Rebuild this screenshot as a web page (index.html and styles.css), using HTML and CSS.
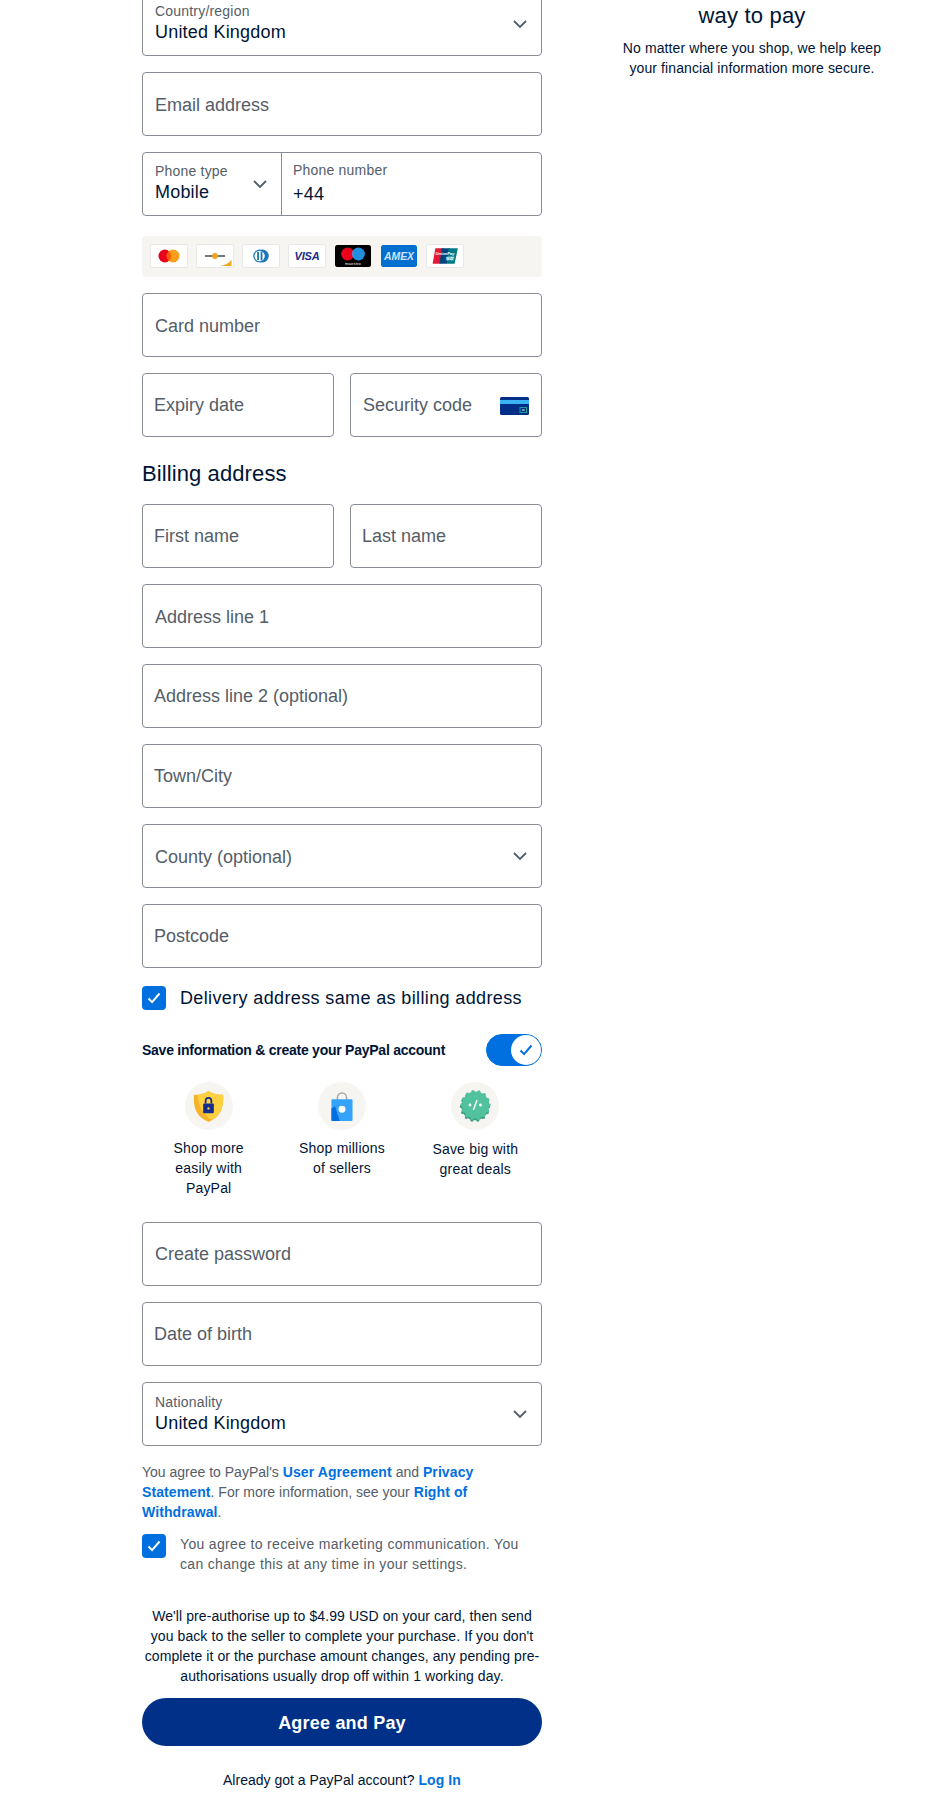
FILE: index.html
```html
<!DOCTYPE html>
<html lang="en">
<head>
    <meta charset="UTF-8">
    <meta name="viewport" content="width=device-width, initial-scale=1.0">
    <title>PayPal Guest Checkout</title>
    <link rel="stylesheet" href="styles.css">
</head>
<body>
    <svg class="defs" width="0" height="0">
        <symbol id="chevron" viewBox="0 0 14 9"><path d="M1 1l6 6 6-6" fill="none" stroke="#545d68" stroke-width="1.8"/></symbol>
        <symbol id="tick" viewBox="0 0 14 12"><path d="M1.5 6.5l3.6 3.6 7.4-8.6" fill="none" stroke="currentColor" stroke-width="2"/></symbol>
    </svg>

    <div class="page">
        <main class="checkout">
            <div class="field field-stacked">
                <span class="small-label">Country/region</span>
                <span class="value">United Kingdom</span>
                <svg class="chevron"><use href="#chevron"/></svg>
            </div>

            <div class="field"><span class="hint">Email address</span></div>

            <div class="phone">
                <div class="phone-type">
                    <span class="small-label">Phone type</span>
                    <span class="value">Mobile</span>
                    <svg class="chevron"><use href="#chevron"/></svg>
                </div>
                <div class="phone-number">
                    <span class="small-label">Phone number</span>
                    <span class="value">+44</span>
                </div>
            </div>

            <div class="cards">
                <svg class="card" viewBox="0 0 38 24">
                    <circle cx="14.5" cy="12" r="7" fill="#eb001b"/>
                    <circle cx="23.5" cy="12" r="7" fill="#f79e1b"/>
                    <path d="M19 6.6a7 7 0 0 1 0 10.8 7 7 0 0 1 0-10.8z" fill="#ff5f00"/>
                </svg>
                <svg class="card" viewBox="0 0 38 24">
                    <path d="M8 12h22" stroke="#4a4a4a" stroke-width="1.6"/>
                    <circle cx="19" cy="12" r="3.2" fill="#f0a51e"/>
                    <path d="M24 23c6-1 10-3 13-7v7z" fill="#f0a51e"/>
                </svg>
                <svg class="card" viewBox="0 0 38 24">
                    <circle cx="20.5" cy="12" r="7" fill="#1b78b8"/>
                    <circle cx="17.5" cy="12" r="7" fill="#1b78b8"/>
                    <circle cx="17.5" cy="12" r="5.6" fill="#fff"/>
                    <path d="M15.8 7.6v8.8" stroke="#1b78b8" stroke-width="2"/>
                    <path d="M19.6 7v10" stroke="#1b78b8" stroke-width="2"/>
                </svg>
                <svg class="card" viewBox="0 0 38 24">
                    <text class="visa-text" x="19" y="16.5" text-anchor="middle">VISA</text>
                </svg>
                <svg class="card card-bare" viewBox="0 0 36 22">
                    <rect width="36" height="22" rx="1.5" fill="#000"/>
                    <circle cx="12.6" cy="9" r="6.5" fill="#eb001b"/>
                    <circle cx="23.4" cy="9" r="6.5" fill="#1f8fe0"/>
                    <path d="M18 5.400a6.500 6.500 0 0 1 0 7.200 6.500 6.500 0 0 1 0-7.200z" fill="#7673c0"/>
                    <text class="maestro-text" x="18" y="20" text-anchor="middle">maestro</text>
                </svg>
                <svg class="card card-bare" viewBox="0 0 36 22">
                    <rect width="36" height="22" rx="1.5" fill="#016fd0"/>
                    <text class="amex-text" x="18" y="15" text-anchor="middle" textLength="30" lengthAdjust="spacingAndGlyphs">AMEX</text>
                </svg>
                <svg class="card" viewBox="0 0 38 24">
                    <path d="M8.500 3.500h9l-3.500 17H5.500z" fill="#e21836"/>
                    <path d="M15.500 3.500h9l-3.500 17h-8z" fill="#00447c"/>
                    <path d="M23 3.500h10l-3.500 17H21z" fill="#007b84"/>
                    <text class="union-text" x="19" y="10.500" text-anchor="middle">UnionPay</text>
                    <text class="union-text" x="24" y="16.500" text-anchor="middle">银联</text>
                </svg>
            </div>

            <div class="field"><span class="hint">Card number</span></div>

            <div class="pair">
                <div class="field field-tight field-expiry"><span class="hint">Expiry date</span></div>
                <div class="field field-cvv">
                    <span class="hint">Security code</span>
                    <svg class="cvv-icon" viewBox="0 0 29 18">
                        <rect width="29" height="18" rx="1.5" fill="#012f87"/>
                        <rect y="3" width="29" height="4" fill="#3cb4f4"/>
                        <rect x="20" y="10.5" width="6.5" height="5" fill="none" stroke="#1e9e9e" stroke-width="1"/>
                        <path d="M21.8 13h3" stroke="#cfe" stroke-width="1"/>
                    </svg>
                </div>
            </div>

            <h2 class="section-title">Billing address</h2>

            <div class="pair">
                <div class="field field-tight"><span class="hint">First name</span></div>
                <div class="field field-tight"><span class="hint">Last name</span></div>
            </div>

            <div class="field"><span class="hint">Address line 1</span></div>
            <div class="field field-tight"><span class="hint">Address line 2 (optional)</span></div>
            <div class="field field-tight"><span class="hint">Town/City</span></div>
            <div class="field">
                <span class="hint">County (optional)</span>
                <svg class="chevron"><use href="#chevron"/></svg>
            </div>
            <div class="field field-tight"><span class="hint">Postcode</span></div>

            <label class="check-row">
                <span class="checkbox"><svg class="tick"><use href="#tick"/></svg></span>
                <span class="check-text">Delivery address same as billing address</span>
            </label>

            <div class="save-row">
                <span class="save-text">Save information &amp; create your PayPal account</span>
                <span class="toggle"><span class="knob"><svg class="tick"><use href="#tick"/></svg></span></span>
            </div>

            <div class="perks">
                <div class="perk">
                    <span class="perk-icon">
                        <svg viewBox="0 0 32 34" width="31" height="33" preserveAspectRatio="none">
                            <path d="M16 1c4 3 9 4 15 4 1 12-2 23-15 28C3 28 0 17 1 5c6 0 11-1 15-4z" fill="#f5b32c"/>
                            <path d="M16 1c4 3 9 4 15 4 1 10-2 20-11 26C10 26 5 15 5 5c4 0 8-2 11-4z" fill="#ffd140"/>
                            <rect x="10.500" y="14" width="11" height="10" rx="1" fill="#142c8e"/>
                            <path d="M13 14v-3a3 3 0 0 1 6 0v3" fill="none" stroke="#142c8e" stroke-width="1.800"/>
                            <circle cx="16" cy="19" r="1.200" fill="#ffd140"/>
                        </svg>
                    </span>
                    <p class="perk-text">Shop more<br>easily with<br>PayPal</p>
                </div>
                <div class="perk">
                    <span class="perk-icon">
                        <svg viewBox="0 0 24 32" width="22" height="29" preserveAspectRatio="none">
                            <path d="M7 9V6a5 5 0 0 1 10 0v3" fill="none" stroke="#a8a8a8" stroke-width="1.600"/>
                            <rect x="0.500" y="8" width="23" height="24" rx="1" fill="#36a3fb"/>
                            <path d="M0.500 18l4-2 5 16H1.500a1 1 0 0 1-1-1z" fill="#0070e0"/>
                            <circle cx="12" cy="19" r="3.800" fill="#fff"/>
                        </svg>
                    </span>
                    <p class="perk-text">Shop millions<br>of sellers</p>
                </div>
                <div class="perk perk-low">
                    <span class="perk-icon">
                        <svg viewBox="0 0 32 32" width="32" height="32">
                            <circle class="badge-edge" cx="16" cy="16.800" r="13.500"/>
                            <circle class="badge-top" cx="16.500" cy="15" r="13.500"/>
                            <path d="M18 10l-3.600 10" stroke="#fff" stroke-width="1.400"/>
                            <circle cx="11" cy="15" r="1.400" fill="#fff"/>
                            <circle cx="21.500" cy="15" r="1.400" fill="#fff"/>
                        </svg>
                    </span>
                    <p class="perk-text">Save big with<br>great deals</p>
                </div>
            </div>

            <div class="field field-up"><span class="hint">Create password</span></div>
            <div class="field field-tight"><span class="hint">Date of birth</span></div>
            <div class="field field-stacked field-nationality">
                <span class="small-label">Nationality</span>
                <span class="value">United Kingdom</span>
                <svg class="chevron"><use href="#chevron"/></svg>
            </div>

            <p class="legal">You agree to PayPal's <a href="#">User Agreement</a> and <a href="#">Privacy Statement</a>. For more information, see your <a href="#">Right of Withdrawal</a>.</p>

            <label class="check-row check-row-top">
                <span class="checkbox"><svg class="tick"><use href="#tick"/></svg></span>
                <span class="marketing-text">You agree to receive marketing communication. You can change this at any time in your settings.</span>
            </label>

            <p class="preauth">We'll pre-authorise up to $4.99 USD on your card, then send you back to the seller to complete your purchase. If you don't complete it or the purchase amount changes, any pending pre-authorisations usually drop off within 1 working day.</p>

            <button class="pay-button" type="button">Agree and Pay</button>

            <p class="login">Already got a PayPal account? <a href="#">Log In</a></p>
        </main>

        <aside class="promo">
            <h2 class="promo-title">PayPal is the safer, easier<br>way to pay</h2>
            <p class="promo-text">No matter where you shop, we help keep your financial information more secure.</p>
        </aside>
    </div>
</body>
</html>
```

FILE: styles.css
```css
* {
    box-sizing: border-box;
}

html, body {
    margin: 0;
    height: 1810px;
    overflow: hidden;
    background: #fff;
}

body {
    font-family: "Liberation Sans", Arial, sans-serif;
    color: #001435;
    letter-spacing: 0.2px;
}

.defs {
    position: absolute;
}

.page {
    display: flex;
    align-items: flex-start;
    gap: 60px;
    margin-top: -8px;
    padding-left: 142px;
}

.checkout {
    width: 400px;
    flex: none;
}

/* Campos */
.field, .phone {
    height: 64px;
    border: 1px solid #888c94;
    border-radius: 4px;
    background: #fff;
    margin-bottom: 16px;
}

.field {
    display: flex;
    align-items: center;
    padding: 2px 0 0 12px;
    position: relative;
}

.field-tight {
    padding-top: 0;
    padding-left: 11px;
}

.field-expiry, .field-cvv {
    padding-top: 1px;
}

.field-up {
    padding-top: 0;
}

.field-stacked {
    flex-direction: column;
    align-items: flex-start;
    justify-content: center;
    padding-top: 0;
    padding-bottom: 3px;
}

.field-nationality {
    padding-bottom: 1px;
}

.hint {
    font-size: 18px;
    letter-spacing: 0;
    color: #545d68;
}

.small-label {
    font-size: 14px;
    line-height: 20px;
    color: #545d68;
}

.value {
    font-size: 18px;
    line-height: 23px;
    color: #001435;
}

.chevron {
    position: absolute;
    right: 14px;
    top: 27px;
    width: 14px;
    height: 9px;
}

.phone {
    display: flex;
    margin-bottom: 20px;
}

.phone-type, .phone-number {
    display: flex;
    flex-direction: column;
    justify-content: center;
    position: relative;
}

.phone-type {
    width: 139px;
    padding: 0 0 3px 12px;
    border-right: 1px solid #888c94;
}

.phone-number {
    flex: 1;
    padding: 0 0 2px 11px;
}

.phone-number .value {
    margin-top: 3px;
}

.cards {
    display: flex;
    gap: 8px;
    height: 41px;
    padding: 8px;
    margin-bottom: 16px;
    background: #f6f5f1;
    border-radius: 4px;
}

.card {
    width: 38px;
    height: 24px;
    flex: none;
    background: #fff;
    border: 1px solid #e8e8e6;
    border-radius: 2px;
}

.card-bare {
    width: 36px;
    height: 22px;
    margin: 1px;
    background: none;
    border: none;
}

.visa-text {
    font: italic bold 12px "Liberation Sans", sans-serif;
    letter-spacing: -0.2px;
    fill: #1a2a8a;
}

.maestro-text {
    font: 4px "Liberation Sans", sans-serif;
    fill: #fff;
}

.amex-text {
    font: italic bold 10.5px "Liberation Sans", sans-serif;
    letter-spacing: 0;
    fill: #cfe4fa;
}

.union-text {
    font: italic bold 4.5px "Liberation Sans", "Noto Sans CJK SC", sans-serif;
    letter-spacing: 0;
    fill: #fff;
}

.pair {
    display: grid;
    grid-template-columns: 1fr 1fr;
    gap: 16px;
}

.field-cvv {
    padding-left: 12px;
}

.cvv-icon {
    position: absolute;
    right: 12px;
    top: 23px;
    width: 29px;
    height: 18px;
}

.section-title {
    margin: 5px 0 15px;
    font-size: 22px;
    line-height: 31px;
    font-weight: 400;
    letter-spacing: 0.1px;
}

/* Casillas */
.check-row {
    display: flex;
    align-items: center;
    gap: 14px;
    margin: 18px 0 24px;
}

.checkbox {
    width: 24px;
    height: 24px;
    flex: none;
    display: flex;
    align-items: center;
    justify-content: center;
    background: #0070e0;
    border-radius: 4px;
    color: #fff;
}

.tick {
    width: 14px;
    height: 12px;
}

.check-text {
    font-size: 18px;
    letter-spacing: 0.37px;
}

.save-row {
    display: flex;
    align-items: center;
    justify-content: space-between;
    height: 32px;
}

.save-text {
    font-size: 14px;
    font-weight: bold;
    letter-spacing: -0.25px;
}

.toggle {
    display: flex;
    justify-content: flex-end;
    width: 56px;
    height: 32px;
    background: #0070e0;
    border-radius: 16px;
    border: 1px solid #0070e0;
}

.knob {
    width: 30px;
    height: 30px;
    display: flex;
    align-items: center;
    justify-content: center;
    background: #fff;
    border-radius: 50%;
    color: #0070e0;
}

.perks {
    display: grid;
    grid-template-columns: repeat(3, 1fr);
    margin: 16px 0 24px;
}

.perk {
    display: flex;
    flex-direction: column;
    align-items: center;
}

.perk-icon {
    width: 48px;
    height: 48px;
    display: flex;
    align-items: center;
    justify-content: center;
    background: #f6f5f1;
    border-radius: 50%;
}

.badge-edge, .badge-top {
    stroke-width: 3.4;
    stroke-linecap: round;
    stroke-dasharray: 0 6.06;
}

.badge-edge {
    fill: #3e9f85;
    stroke: #3e9f85;
}

.badge-top {
    fill: #52c19d;
    stroke: #52c19d;
}

.perk-text {
    margin: 8px 0 0;
    font-size: 14px;
    line-height: 20px;
    text-align: center;
}

.perk-low .perk-text {
    margin-top: 9px;
}

/* Textos legales */
.legal {
    margin: 0 0 12px;
    font-size: 14px;
    line-height: 20px;
    letter-spacing: 0;
    color: #545d68;
}

a {
    color: #0070e0;
    font-weight: bold;
    letter-spacing: 0.1px;
    text-decoration: none;
}

.check-row-top {
    align-items: flex-start;
    margin: 0 0 32px;
}

.marketing-text {
    max-width: 345px;
    font-size: 14px;
    line-height: 20px;
    letter-spacing: 0.33px;
    color: #545d68;
}

.preauth {
    margin: 0 0 12px;
    font-size: 14px;
    line-height: 20px;
    letter-spacing: 0.09px;
    text-align: center;
}

.pay-button {
    display: block;
    width: 100%;
    height: 48px;
    padding-top: 3px;
    border: none;
    border-radius: 24px;
    background: #003087;
    color: #fff;
    font: bold 18px "Liberation Sans", Arial, sans-serif;
    letter-spacing: 0.2px;
}

.login {
    margin: 24px 0 0;
    font-size: 14px;
    line-height: 20px;
    letter-spacing: 0;
    text-align: center;
}

/* Columna derecha */
.promo {
    width: 300px;
    flex: none;
    margin-top: -18px;
    text-align: center;
}

.promo-title {
    margin: 0 0 8px;
    font-size: 22px;
    line-height: 28px;
    font-weight: 400;
}

.promo-text {
    margin: 0;
    padding: 0 18px;
    font-size: 14px;
    line-height: 20px;
    letter-spacing: 0.1px;
}
```
